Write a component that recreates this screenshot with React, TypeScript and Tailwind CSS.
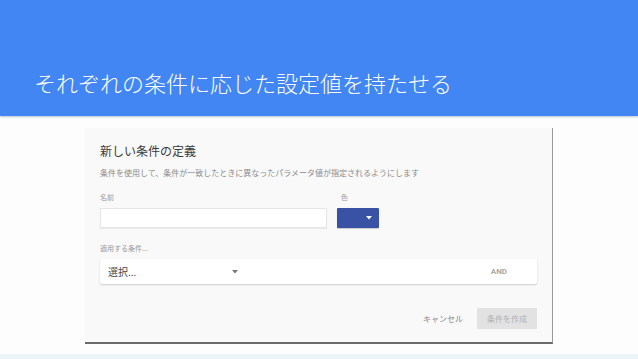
import React from 'react';

const jp = { fontFamily: '"Noto Sans CJK JP", "Noto Sans", sans-serif' };

function Caret({ className = '' }: { className?: string }) {
    return (
        <svg width="6" height="4" viewBox="0 0 6 4" className={className}>
            <path d="M0 0 L6 0 L3 3.5 Z" fill="currentColor" />
        </svg>
    );
}

export default function App() {
    return (
        <div className="w-[638px] h-[359px] bg-[#fdfdfd] flex flex-col overflow-hidden" style={jp}>
            {/* Slide header */}
            <header className="h-[116px] bg-[#4286f4] shrink-0 pl-[34px] pt-[71px] shadow-[0_1px_2px_rgba(60,80,120,0.35)] z-10">
                <h1 className="text-white text-[22px] leading-[22px] font-light">それぞれの条件に応じた設定値を持たせる</h1>
            </header>

            <main className="flex-1 flex flex-col">
                <div className="ml-[85px] mt-[12px] w-[468px] h-[216px] bg-[#f9f9f9] border-r border-r-[#9a9a9a] border-b-2 border-b-[#6a6a6a] px-[15px] flex flex-col">
                    <h2 className="mt-[16px] text-[12px] leading-[14px] text-[#3a3a3a]">新しい条件の定義</h2>
                    <p className="mt-[10px] text-[8px] leading-[10px] text-[#8a8a8a]">
                        条件を使用して、条件が一致したときに異なったパラメータ値が指定されるようにします
                    </p>

                    <div className="mt-[15px] flex gap-[10px]">
                        <div className="w-[227px] flex flex-col">
                            <span className="text-[7px] leading-[9px] text-[#9a9a9a]">名前</span>
                            <div className="mt-[6px] h-[20px] bg-white border border-[#e6e6e6] shadow-[0_1px_1px_rgba(0,0,0,0.06)]" />
                        </div>
                        <div className="flex flex-col">
                            <span className="pl-[4px] text-[7px] leading-[9px] text-[#9a9a9a]">色</span>
                            <div className="mt-[6px] w-[42px] h-[20px] bg-[#3a52a4] rounded-[1px] flex items-center justify-end pr-[7px] text-white shadow-[0_1px_1px_rgba(0,0,0,0.2)]">
                                <Caret />
                            </div>
                        </div>
                    </div>

                    <span className="mt-[16px] text-[7px] leading-[9px] text-[#9a9a9a]">適用する条件...</span>
                    <div className="mt-[6px] h-[25px] bg-white rounded-[2px] shadow-[0_1px_2px_rgba(0,0,0,0.18)] flex items-center justify-between pl-[8px] pr-[30px]">
                        <div className="w-[130px] flex items-center justify-between text-[#777]">
                            <span className="text-[10px] leading-[12px] text-[#444]">選択...</span>
                            <Caret />
                        </div>
                        <span className="text-[8px] font-bold text-[#a8a8a8]" style={{ fontFamily: 'Roboto, sans-serif' }}>AND</span>
                    </div>

                    <div className="mt-[24px] flex items-center justify-end gap-[14px]">
                        <span className="text-[8px] leading-[10px] text-[#8a8a8a]">キャンセル</span>
                        <div className="w-[60px] h-[21px] bg-[#e2e2e2] rounded-[1px] flex items-center justify-center text-[8px] text-[#b0b0b0]">
                            条件を作成
                        </div>
                    </div>
                </div>
                <div className="mt-auto h-[5px] bg-[#eef3f9]" />
            </main>
        </div>
    );
}
